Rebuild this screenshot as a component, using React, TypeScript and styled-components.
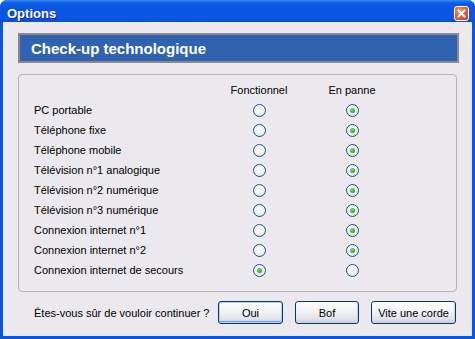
import React from 'react';
import styled, { createGlobalStyle } from 'styled-components';

const GlobalStyle = createGlobalStyle`
  html, body {
    margin: 0;
    padding: 0;
    background: #ffffff;
  }
  * {
    box-sizing: border-box;
  }
`;

const Window = styled.div`
  width: 475px;
  height: 339px;
  display: flex;
  flex-direction: column;
  background: #0a55e0;
  border-radius: 7px 7px 0 0;
  overflow: hidden;
  font-family: 'Liberation Sans', Arial, sans-serif;
`;

const TitleBar = styled.div`
  height: 22px;
  flex-shrink: 0;
  display: flex;
  align-items: center;
  justify-content: space-between;
  padding: 0 6px 0 7px;
  background: linear-gradient(
    to bottom,
    #3b8cf5 0%,
    #0f5fe6 12%,
    #0a55e0 40%,
    #0a56e3 80%,
    #0b4fd0 100%
  );
`;

const Title = styled.span`
  color: #ffffff;
  font-weight: bold;
  font-size: 13px;
  margin-top: 4px;
  text-shadow: 1px 1px 0 #0c2e8a;
`;

const CloseButton = styled.div`
  width: 15px;
  height: 15px;
  border-radius: 3px;
  border: 1px solid #ffffff;
  background: radial-gradient(circle at 35% 30%, #f0a080 0%, #e0603a 45%, #c83a18 100%);
  display: flex;
  align-items: center;
  justify-content: center;
  margin-top: 4px;
`;

const Body = styled.div`
  flex: 1;
  margin: 0 3px 3px 3px;
  background: #ebe9ed;
  padding: 11px 14px 0 15px;
  display: flex;
  flex-direction: column;
`;

const HeaderPanel = styled.div`
  height: 30px;
  width: 441px;
  background: #3162b0;
  border: 2px solid #8a8a8e;
  display: flex;
  align-items: center;
  padding-left: 11px;
  color: #ffffff;
  font-weight: bold;
  font-size: 15px;
`;

const GroupBox = styled.div`
  margin-top: 11px;
  width: 439px;
  height: 218px;
  border: 1px solid #b5b3b8;
  border-radius: 4px;
  padding: 5px 0 0 15px;
`;

const Grid = styled.div`
  display: grid;
  grid-template-columns: 178px 94px 92px;
  grid-auto-rows: 20px;
  font-size: 11px;
  color: #000000;
`;

const Cell = styled.div<{ $center?: boolean }>`
  display: flex;
  align-items: center;
  justify-content: ${(p) => (p.$center ? 'center' : 'flex-start')};
  white-space: nowrap;
`;

const Radio = styled.span<{ $checked?: boolean }>`
  width: 13px;
  height: 13px;
  border-radius: 50%;
  border: 1px solid #1d5281;
  background: radial-gradient(circle at 40% 35%, #ffffff 0%, #f4f4f2 45%, #d8d7d0 100%);
  display: flex;
  align-items: center;
  justify-content: center;
  margin-left: 1px;

  &::after {
    content: '';
    display: ${(p) => (p.$checked ? 'block' : 'none')};
    width: 5px;
    height: 5px;
    border-radius: 50%;
    background: radial-gradient(circle at 40% 35%, #7de07d 0%, #26b226 60%, #168a16 100%);
  }
`;

const Footer = styled.div`
  margin-top: 9px;
  display: flex;
  align-items: center;
  height: 23px;
  padding: 0 2px 0 16px;
  font-size: 11px;
`;

const Question = styled.span`
  flex: 1;
  min-width: 0;
  white-space: nowrap;
`;

const Button = styled.button<{ $width: number; $default?: boolean }>`
  width: ${(p) => p.$width}px;
  height: 23px;
  flex: none;
  margin-left: 12px;
  padding: 0;
  font-family: 'Liberation Sans', Arial, sans-serif;
  font-size: 11px;
  font-weight: normal;
  color: #000000;
  border: 1px solid #003c74;
  border-radius: 3px;
  background: linear-gradient(to bottom, #ffffff 0%, #f4f3f6 40%, #e3e2ea 80%, #c9cad8 100%);
  box-shadow: ${(p) =>
    p.$default
      ? 'inset 0 0 0 1px #b8d0f6, inset 0 -1px 0 1px #7ba1e6'
      : 'inset -1px -1px 0 #d1cfd9'};
`;

const rows: { label: string; working: boolean }[] = [
  { label: 'PC portable', working: false },
  { label: 'Téléphone fixe', working: false },
  { label: 'Téléphone mobile', working: false },
  { label: 'Télévision n°1 analogique', working: false },
  { label: 'Télévision n°2 numérique', working: false },
  { label: 'Télévision n°3 numérique', working: false },
  { label: 'Connexion internet n°1', working: false },
  { label: 'Connexion internet n°2', working: false },
  { label: 'Connexion internet de secours', working: true },
];

const App = () => {
  return (
    <>
      <GlobalStyle />
      <Window>
        <TitleBar>
          <Title>Options</Title>
          <CloseButton>
            <svg width="9" height="9" viewBox="0 0 9 9">
              <path d="M1.5 1.5 L7.5 7.5 M7.5 1.5 L1.5 7.5" stroke="#ffffff" strokeWidth="2" strokeLinecap="square" />
            </svg>
          </CloseButton>
        </TitleBar>
        <Body>
          <HeaderPanel>Check-up technologique</HeaderPanel>
          <GroupBox>
            <Grid>
              <Cell />
              <Cell $center>Fonctionnel</Cell>
              <Cell $center>En panne</Cell>
              {rows.map((row) => (
                <React.Fragment key={row.label}>
                  <Cell>{row.label}</Cell>
                  <Cell $center>
                    <Radio $checked={row.working} />
                  </Cell>
                  <Cell $center>
                    <Radio $checked={!row.working} />
                  </Cell>
                </React.Fragment>
              ))}
            </Grid>
          </GroupBox>
          <Footer>
            <Question>Êtes-vous sûr de vouloir continuer ?</Question>
            <Button $width={65} $default>Oui</Button>
            <Button $width={64}>Bof</Button>
            <Button $width={85}>Vite une corde</Button>
          </Footer>
        </Body>
      </Window>
    </>
  );
};

export default App;
